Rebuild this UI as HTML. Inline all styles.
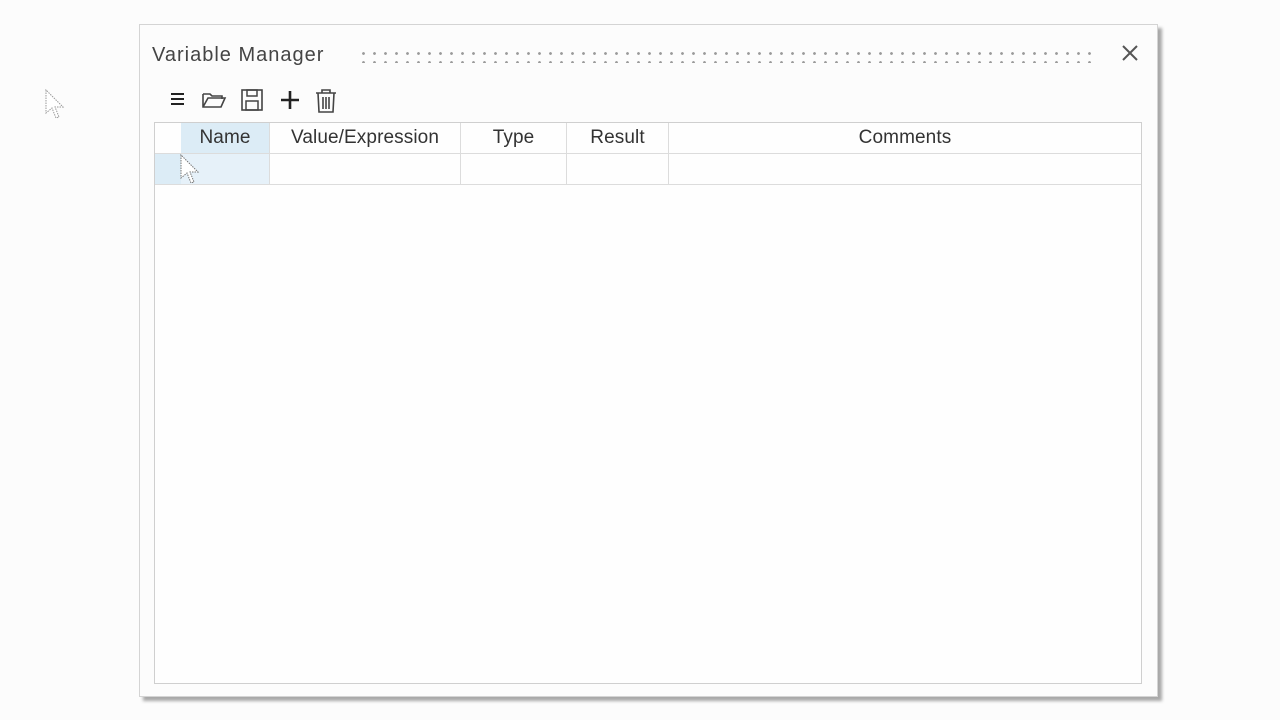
<!DOCTYPE html>
<html><head><style>
body{margin:0;width:1280px;height:720px;background:#fcfcfc;position:relative;overflow:hidden;font-family:"Liberation Sans",sans-serif;}
.dlg{position:absolute;left:139px;top:24px;width:1017px;height:671px;background:#fcfcfc;border:1px solid #d4d4d4;box-shadow:4px 4px 3px #a8a8a8;}
.title{position:absolute;left:12px;top:19px;font-size:20px;letter-spacing:1px;color:#444;}
.dots{position:absolute;left:218px;top:24px;width:737px;height:14px;background-image:radial-gradient(circle,#9a9a9a 1.2px,transparent 1.6px);background-size:11px 9px;}
.close{position:absolute;left:980px;top:18px;}
.tb{position:absolute;top:63px;}
.grid{position:absolute;left:14px;top:97px;width:986px;height:560px;border:1px solid #cfcfcf;background:#fefefe;}
.hdr,.row{position:absolute;left:0;display:flex;width:986px;}
.hdr{top:0;height:30px;border-bottom:1px solid #dcdcdc;}
.row{top:31px;height:30px;border-bottom:1px solid #dcdcdc;}
.c{box-sizing:border-box;border-right:1px solid #dcdcdc;font-size:19px;color:#333;text-align:center;line-height:30px;letter-spacing:0.1px;}
</style></head><body>
<svg style="position:absolute;left:45px;top:89px" width="24" height="34"><path d="M1 1 L1 24 L7 19 L11 29 L14 28 L10 18 L18 18 Z" fill="#fff" stroke="#999" stroke-width="1" stroke-dasharray="1.5 1"/></svg>
<div class="dlg">
<div class="title">Variable Manager</div>
<div class="dots"></div>
<svg class="close" width="20" height="20"><path d="M3 3L17 17M17 3L3 17" stroke="#555" stroke-width="2"/></svg>
<svg class="tb" style="left:30px" width="16" height="20"><path d="M1 6h13M1 11h13M1 16h13" stroke="#222" stroke-width="2"/></svg>
<svg class="tb" style="left:61px" width="28" height="24"><path d="M2 6h7l2 2h10v3M2 6v13h18l4-9H7l-5 9" fill="none" stroke="#444" stroke-width="1.6"/></svg>
<svg class="tb" style="left:100px" width="24" height="24"><rect x="2" y="2" width="20" height="20" fill="none" stroke="#444" stroke-width="1.6"/><rect x="7" y="2" width="10" height="6" fill="none" stroke="#444" stroke-width="1.5"/><rect x="6" y="13" width="12" height="9" fill="none" stroke="#444" stroke-width="1.5"/></svg>
<svg class="tb" style="left:139px" width="22" height="24"><path d="M11 3v18M2 12h18" stroke="#222" stroke-width="2.6"/></svg>
<svg class="tb" style="left:174px" width="24" height="26"><path d="M2 5h20M8 5V2h8v3M4 5l1 19h14l1-19M9 9v12M12 9v12M15 9v12" fill="none" stroke="#444" stroke-width="1.6"/></svg>
<div class="grid">
<div class="hdr">
<div class="c" style="width:26px;border-right:none"></div>
<div class="c" style="width:89px;background:#dcecf6">Name</div>
<div class="c" style="width:191px">Value/Expression</div>
<div class="c" style="width:106px">Type</div>
<div class="c" style="width:102px">Result</div>
<div class="c" style="width:472px;border-right:none">Comments</div>
</div>
<div class="row">
<div class="c" style="width:26px;background:#dcecf6;border-right:none"></div>
<div class="c" style="width:89px;background:#e6f1f9"></div>
<div class="c" style="width:191px"></div>
<div class="c" style="width:106px"></div>
<div class="c" style="width:102px"></div>
<div class="c" style="width:472px;border-right:none"></div>
</div>
<svg style="position:absolute;left:25px;top:31px" width="24" height="34"><path d="M1 1 L1 24 L7 19 L11 29 L14 28 L10 18 L18 18 Z" fill="#fff" stroke="#777" stroke-width="1" stroke-dasharray="1.5 1"/></svg>
</div>
</div>
</body></html>
